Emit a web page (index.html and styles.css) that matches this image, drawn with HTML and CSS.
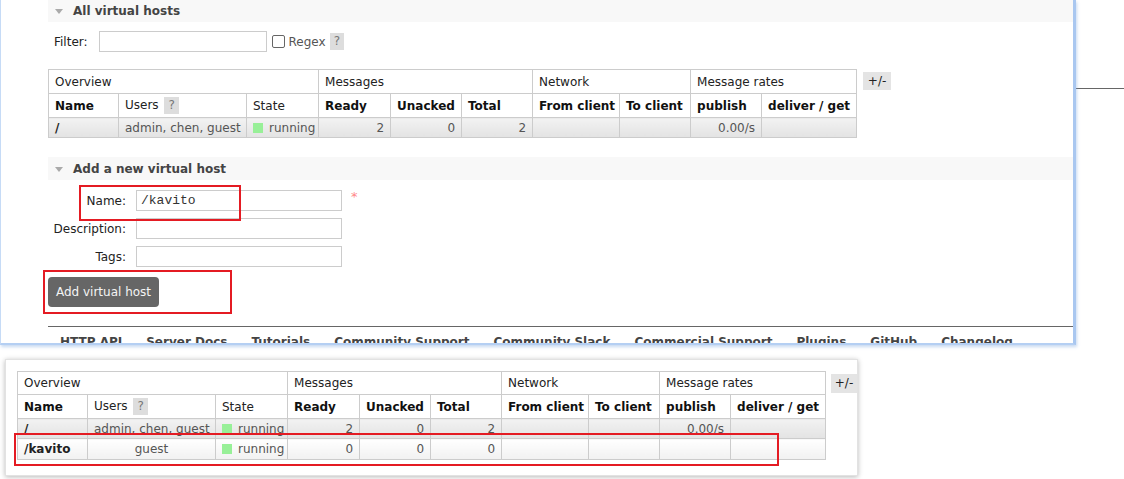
FILE: index.html
```html
<!DOCTYPE html>
<html>
<head>
<meta charset="utf-8">
<link rel="stylesheet" href="styles.css">
</head>
<body>
<div class="page">
  <div class="top">
    <div class="window">
      <div class="section-head first"><span class="tri"></span>All virtual hosts</div>
      <div class="filter-row">
        <span class="filter-label">Filter:</span>
        <span class="text-input filter-input"></span>
        <span class="cb"></span><span class="regex">Regex</span><span class="help">?</span>
      </div>
      <div class="table-wrap">
        <table class="list">
          <colgroup>
            <col class="c-name"><col class="c-users"><col class="c-state"><col class="c-ready"><col class="c-unacked"><col class="c-total"><col class="c-from"><col class="c-to"><col class="c-pub"><col class="c-del">
          </colgroup>
          <tr class="group">
            <th colspan="3">Overview</th><th colspan="3">Messages</th><th colspan="2">Network</th><th colspan="2">Message rates</th>
          </tr>
          <tr class="heads">
            <th class="b">Name</th><th>Users <span class="help">?</span></th><th>State</th><th class="b">Ready</th><th class="b">Unacked</th><th class="b">Total</th><th class="b">From client</th><th class="b">To client</th><th class="b">publish</th><th class="b">deliver / get</th>
          </tr>
          <tr class="alt1">
            <td class="name">/</td><td>admin, chen, guest</td><td><span class="dot"></span>running</td><td class="num">2</td><td class="num">0</td><td class="num">2</td><td></td><td></td><td class="num">0.00/s</td><td></td>
          </tr>
        </table>
        <span class="plusminus">+/-</span>
      </div>
      <div class="section-head"><span class="tri"></span>Add a new virtual host</div>
      <div class="vform">
        <span class="flabel">Name:</span><span class="text-input finput mono">/kavito</span><span class="req">*</span>
        <span class="flabel">Description:</span><span class="text-input finput"></span><span></span>
        <span class="flabel">Tags:</span><span class="text-input finput"></span><span></span>
      </div>
      <div class="btn-row"><span class="btn">Add virtual host</span></div>
      <div class="footer">
        <span>HTTP API</span><span>Server Docs</span><span>Tutorials</span><span>Community Support</span><span>Community Slack</span><span>Commercial Support</span><span>Plugins</span><span>GitHub</span><span>Changelog</span>
      </div>
      <div class="mark mark-name"></div>
      <div class="mark mark-btn"></div>
    </div>
    <div class="outside"><div class="outside-line"></div></div>
  </div>

  <div class="card">
    <div class="table-wrap">
      <table class="list">
        <colgroup>
          <col class="c-name"><col class="c-users"><col class="c-state"><col class="c-ready"><col class="c-unacked"><col class="c-total"><col class="c-from"><col class="c-to"><col class="c-pub"><col class="c-del">
        </colgroup>
        <tr class="group">
          <th colspan="3">Overview</th><th colspan="3">Messages</th><th colspan="2">Network</th><th colspan="2">Message rates</th>
        </tr>
        <tr class="heads">
          <th class="b">Name</th><th>Users <span class="help">?</span></th><th>State</th><th class="b">Ready</th><th class="b">Unacked</th><th class="b">Total</th><th class="b">From client</th><th class="b">To client</th><th class="b">publish</th><th class="b">deliver / get</th>
        </tr>
        <tr class="alt1">
          <td class="name">/</td><td>admin, chen, guest</td><td><span class="dot"></span>running</td><td class="num">2</td><td class="num">0</td><td class="num">2</td><td></td><td></td><td class="num">0.00/s</td><td></td>
        </tr>
        <tr class="alt2">
          <td class="name">/kavito</td><td class="center">guest</td><td><span class="dot"></span>running</td><td class="num">0</td><td class="num">0</td><td class="num">0</td><td></td><td></td><td></td><td></td>
        </tr>
      </table>
      <span class="plusminus small">+/-</span>
    </div>
    <div class="mark mark-row"></div>
  </div>
</div>
</body>
</html>
```
FILE: styles.css
```css
* { box-sizing: border-box; }
body {
  margin: 0;
  background: #fff;
  font-family: "DejaVu Sans", Verdana, sans-serif;
  font-size: 12px;
  color: #222;
}
.page { width: 1124px; height: 479px; overflow: hidden; }

.top { display: flex; }
.window {
  position: relative;
  width: 1076px;
  height: 345px;
  padding-left: 47px;
  border-left: 1px solid #c6dbf6;
  border-right: 3px solid #a9c7f0;
  border-bottom: 2px solid #b4cff3;
  box-shadow: 1px 2px 3px rgba(130, 170, 225, 0.45);
  overflow: hidden;
  flex: none;
}
.outside { flex: 1; }
.outside-line { margin-top: 88px; border-top: 1px solid #666; }

.section-head {
  display: flex;
  align-items: center;
  height: 23px;
  background: #f8f8f8;
  font-weight: bold;
  color: #444;
  padding-left: 7px;
}
.section-head.first { margin-top: -1px; }
.tri {
  width: 0; height: 0;
  border-left: 4px solid transparent;
  border-right: 4px solid transparent;
  border-top: 5px solid #aaa;
  margin-right: 10px;
  margin-top: 1px;
}

.filter-row {
  display: flex;
  align-items: center;
  margin-top: 9px;
  padding-left: 6px;
  height: 21px;
}
.filter-label { color: #222; margin-right: 11px; }
.text-input {
  display: block;
  height: 21px;
  border: 1px solid #ccc;
  background: #fff;
}
.filter-input { width: 168px; }
.cb {
  width: 13px; height: 13px;
  border: 1px solid #666;
  border-radius: 2px;
  margin-left: 5px;
  margin-right: 4px;
}
.regex { color: #555; }
.help {
  display: inline-block;
  background: #ddd;
  color: #777;
  font-weight: normal;
  padding: 0 4px;
  line-height: 17px;
  margin-left: 4px;
}

.table-wrap {
  display: flex;
  align-items: flex-start;
  margin-top: 17px;
}
.list {
  border-collapse: collapse;
  table-layout: fixed;
  width: 808px;
  border: 1px solid #ccc;
}
.c-name { width: 70px; }
.c-users { width: 128px; }
.c-state { width: 72px; }
.c-ready { width: 72px; }
.c-unacked { width: 71px; }
.c-total { width: 71px; }
.c-from { width: 87px; }
.c-to { width: 71px; }
.c-pub { width: 71px; }
.c-del { width: 95px; }
.list th, .list td {
  border: 1px solid #ccc;
  padding: 0 6px;
  text-align: left;
  white-space: nowrap;
  overflow: hidden;
}
.list th { height: 24px; font-weight: normal; color: #222; background: #fff; }
.list th.b { font-weight: bold; color: #111; }
.list .heads .help { margin-left: 2px; }
.list td { height: 20px; color: #555; }
.list td.name { font-weight: bold; color: #222; }
.list td.num { text-align: right; }
.list td.center { text-align: center; }
.alt1 td { background: linear-gradient(to bottom, #f2f2f2, #e3e3e3); }
.alt2 td { background: linear-gradient(to bottom, #ffffff, #f1f1f1); height: 21px; }
.dot {
  display: inline-block;
  width: 10px; height: 10px;
  background: #98f098;
  margin-right: 6px;
  vertical-align: -1px;
}
.plusminus {
  margin-left: 6px;
  margin-top: 3px;
  width: 28px;
  height: 18px;
  line-height: 18px;
  text-align: center;
  background: #e4e4e4;
  color: #222;
}
.plusminus.small { margin-left: 5px; width: 26px; height: 19px; line-height: 19px; }

.table-wrap + .section-head { margin-top: 19px; }

.vform {
  display: grid;
  grid-template-columns: 78px 206px 20px;
  grid-auto-rows: 21px;
  column-gap: 10px;
  row-gap: 7px;
  margin-top: 10px;
}
.flabel {
  text-align: right;
  line-height: 22px;
  color: #222;
}
.finput { padding-left: 4px; line-height: 19px; }
.mono { font-family: "Liberation Mono", "Courier New", monospace; font-size: 13px; color: #333; }
.req { color: #f88; font-size: 13px; line-height: 14px; margin-left: -1px; }

.btn-row { margin-top: 10px; height: 30px; }
.btn {
  display: inline-block;
  width: 111px;
  height: 30px;
  line-height: 30px;
  text-align: center;
  background: #666;
  color: #f4f4f4;
  border-radius: 4px;
  vertical-align: top;
}

.footer {
  margin-top: 19px;
  border-top: 1px solid #666;
  display: flex;
  gap: 24px;
  padding-left: 12px;
  padding-top: 8px;
  font-weight: bold;
  color: #444;
}

.mark {
  position: absolute;
  border: 2px solid #e41b23;
  pointer-events: none;
}
.mark-name { left: 78px; top: 185px; width: 162px; height: 36px; }
.mark-btn { left: 42px; top: 270px; width: 189px; height: 44px; }

.card {
  position: relative;
  margin: 14px 0 0 5px;
  width: 853px;
  height: 117px;
  border: 1px solid #e2e2e2;
  box-shadow: 0 1px 5px rgba(0, 0, 0, 0.28);
  padding: 11px 0 0 11px;
}
.card .table-wrap { margin-top: 0; }
.card .list th { height: 23px; }
.card .heads th { height: 24px; }
.mark-row { left: 8px; top: 73px; width: 765px; height: 33px; }
```
